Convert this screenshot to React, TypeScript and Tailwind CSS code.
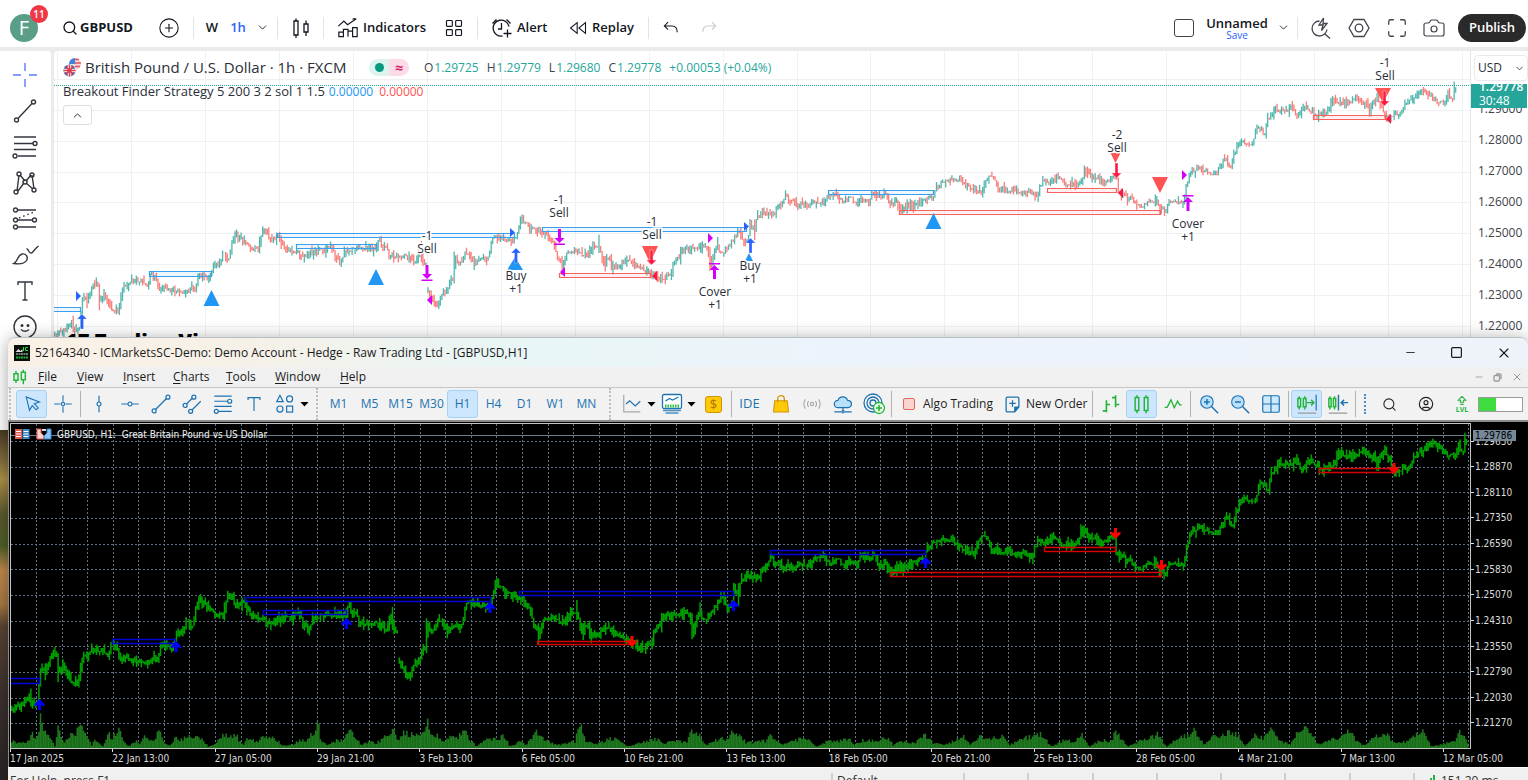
import React from "react";
import {
  ChevronDown, ChevronUp, CirclePlus, Search, LayoutGrid, Camera, Maximize, X, Minus, Square, CircleUser,
} from "lucide-react";

const TV_FONT = "font-['Open_Sans','Noto_Sans',sans-serif]";

/* ---------- price data: [x, y] anchors in thirds of a pixel ---------- */
const LEG_A = [35,778,50,775,65,755,88,735,100,765,112,750,118,700,122,645,130,660,137,670,142,650,155,610,168,610,174,670,180,655,188,645,200,665,212,690,225,705,233,690,240,665,250,615,262,612,272,600,290,605,310,605,322,620,335,580,345,590,360,625,378,620,395,632,415,635,425,628,440,645,450,632,460,625,475,628,482,580,495,585,505,592,520,590,527,555,535,550,548,550,560,510,570,525,580,530,590,465,598,450,605,455,615,460,628,480,645,495,660,490,668,505,678,450,690,432,705,465,720,465,735,450,745,490,760,500,775,500,790,500,805,520,820,510,840,508,860,503,875,502,890,488,900,500,912,525,925,540,935,510,950,500,960,500,975,490,990,490,1005,495,1020,495,1035,500,1040,480,1048,470,1058,490,1070,490,1078,525,1095,520,1115,522,1140,525,1150,530,1160,540,1168,510,1175,490,1183,545,1195,545];
const LEG_B = [1198,640,1210,660,1225,685,1238,655,1250,640,1262,620,1275,590,1280,545,1283,520,1292,550,1305,540,1312,500,1325,520,1345,540,1358,530,1370,515,1380,535,1390,500,1397,460,1420,462,1445,465,1460,470,1470,460,1478,430,1488,400,1500,410,1510,425,1530,437,1565,445,1585,460,1598,515,1610,540,1615,565,1625,520,1640,500,1660,508,1680,512,1698,518,1710,485,1725,490,1732,480,1740,530,1748,540,1760,530,1775,555,1795,550,1815,538,1830,535,1845,550,1860,560,1880,570,1900,580,1915,592,1925,585,1935,598,1942,575,1955,578,1965,540,1980,525,1992,495,2010,500,2030,492,2050,492,2070,490,2077,555,2083,550,2090,510,2098,475,2102,500,2115,505,2130,495,2145,470,2165,440,2175,460,2188,475,2195,470,2202,420,2212,415,2216,445,2222,385,2240,378,2260,380,2275,385,2285,355,2298,355,2315,320,2330,340,2350,355,2370,345,2390,350,2410,340,2430,345,2448,312,2470,325,2490,340,2505,340,2512,325,2535,348,2550,330,2570,340,2582,315,2595,325,2610,325,2622,315,2640,352,2660,345,2675,372,2690,355,2710,355,2730,345,2745,330,2770,325,2780,300,2795,275,2815,272,2835,275,2853,270,2870,290,2885,290,2900,300,2922,312,2932,280,2945,255,2962,270,2975,305,2990,300,3005,315,3020,295,3035,310,3054,315,3074,305,3094,325,3104,290,3116,268,3129,282,3149,272,3169,265,3184,290,3204,285,3224,290,3236,270,3244,235,3259,260,3279,268,3299,285,3316,270,3334,260,3344,270,3349,310,3364,320,3379,335,3399,340,3419,358,3434,350,3449,340,3466,335,3484,370,3499,365,3514,335,3534,338,3549,348,3559,300,3569,262,3584,240,3596,225,3609,240,3629,240,3646,250,3661,235,3672,210,3684,200,3697,230,3709,190,3719,150,3739,145,3754,162,3769,140,3782,95,3794,110,3804,120,3812,75,3824,65,3834,42,3854,42,3874,42,3889,25,3904,60,3916,45,3929,35,3954,50,3959,60,3984,50,3999,48,4014,10,4029,20,4044,20,4059,15,4074,10,4092,0,4109,15,4124,20,4132,50,4139,15,4151,5,4164,15,4172,35,4184,65,4199,60,4214,50,4229,55,4239,30,4249,5,4264,5,4279,-10,4296,-25,4314,-15,4329,5,4344,15,4364,10,4376,-10,4389,5,4394,-25,4404,-40];
const VOLUME = [35,20,60,15,80,15,97,40,110,25,118,60,122,95,130,50,140,40,150,30,165,5,175,85,182,30,195,20,210,40,225,40,243,75,255,40,275,10,285,25,310,5,325,45,335,30,355,60,370,20,385,5,410,20,420,10,435,35,455,20,470,35,478,60,490,20,510,8,525,30,545,25,560,40,575,25,588,48,600,30,625,5,650,15,670,40,690,38,705,40,730,10,745,30,775,15,785,30,820,30,850,8,880,10,900,25,920,20,935,40,950,45,953,85,960,40,965,20,985,8,1010,25,1030,20,1045,55,1065,30,1085,10,1110,20,1130,15,1160,35,1180,55,1195,20,1210,45,1240,40,1260,35,1275,50,1280,95,1290,40,1310,40,1330,15,1345,35,1370,30,1395,50,1410,25,1430,5,1460,30,1490,25,1510,40,1530,5,1560,20,1580,10,1610,48,1630,30,1650,15,1680,10,1700,15,1725,20,1732,50,1748,60,1755,20,1790,10,1825,28,1855,25,1880,5,1915,15,1940,20,1970,28,1990,15,2030,20,2060,15,2078,58,2095,40,2120,10,2140,20,2165,28,2185,25,2200,55,2215,40,2240,15,2270,20,2295,20,2312,38,2330,20,2350,10,2390,25,2420,28,2450,5,2480,20,2505,20,2542,30,2565,10,2595,25,2630,22,2660,30,2680,10,2715,22,2745,15,2775,40,2800,15,2830,10,2860,20,2892,38,2910,10,2940,35,2970,25,3005,35,3030,10,3054,20,3089,35,3124,40,3154,5,3194,25,3224,18,3244,40,3269,5,3304,25,3334,20,3347,50,3364,25,3384,5,3424,25,3454,30,3474,40,3499,5,3534,30,3564,35,3582,50,3614,10,3644,35,3694,45,3714,40,3734,5,3764,35,3794,30,3814,60,3844,20,3869,10,3894,45,3924,58,3954,10,3994,25,4019,25,4039,55,4074,20,4094,8,4124,35,4159,45,4184,12,4224,20,4254,40,4274,50,4294,5,4344,15,4364,20,4381,50,4404,15];
/* long wicks: [x, high, low] */
const SPIKES = [[174,610,697],[137,640,690],[595,445,480],[735,440,470],[925,520,550],[1175,470,540],[1280,505,610],[1340,520,565],[1615,520,582],[1732,450,510],[1748,520,570],[1775,535,580],[1935,580,612],[2076,490,568],[2083,520,562],[2098,457,500],[2202,398,450],[2216,400,467],[1488,390,430],[2675,350,377],[3244,223,260],[3466,318,350],[3500,350,380],[3485,350,382],[3834,30,60],[3889,12,45],[4132,20,62],[4014,-5,30],[4151,0,30],[4394,-52,0],[4376,-25,15]];

type Bar = { x: number; open: number; close: number; high: number; low: number };

function noise(n: number) {
  const v = Math.sin(n * 127.1 + 11.7) * 43758.5453;
  return v - Math.floor(v);
}
function sample(points: number[], x: number) {
  for (let i = 2; i < points.length; i += 2) {
    if (x <= points[i]) {
      const t = (x - points[i - 2]) / (points[i] - points[i - 2]);
      return points[i - 1] + (points[i + 1] - points[i - 1]) * t;
    }
  }
  return points[points.length - 1];
}
function makeBars(points: number[]): Bar[] {
  const bars: Bar[] = [];
  let open = 450 + points[1] / 3;
  for (let x = points[0]; x <= points[points.length - 2]; x += 4.8) {
    const close = 450 + sample(points, x) / 3 + (noise(x) - 0.5) * 5;
    let high = Math.min(open, close) - noise(x + 3) ** 2 * 6 - 0.3;
    let low = Math.max(open, close) + noise(x + 7) ** 2 * 6 + 0.3;
    for (const [sx, top, bottom] of SPIKES) {
      if (Math.abs(sx - x) <= 2.4) {
        high = Math.min(high, 450 + top / 3);
        low = Math.max(low, 450 + bottom / 3);
      }
    }
    bars.push({ x: x / 3, open, close, high, low });
    open = close;
  }
  return bars;
}
const BARS = [...makeBars(LEG_A), ...makeBars(LEG_B)];

const upperX = (x: number) => 81 + (x - 39) * 0.963;
const upperY = (y: number) => 113 + (y - 467) * 0.9156;
function upperPath(rising: boolean) {
  return BARS.filter((b) => b.close <= b.open === rising)
    .map((b) => `M${upperX(b.x).toFixed(1)} ${upperY(b.high).toFixed(1)}V${upperY(b.low).toFixed(1)}`)
    .join("");
}
const UP_PATH = upperPath(true);
const DOWN_PATH = upperPath(false);
const LOWER_PATH = BARS.map((b) => `M${b.x.toFixed(1)} ${b.high.toFixed(1)}V${b.low.toFixed(1)}`).join("");
const VOLUME_PATH = (() => {
  let d = "";
  for (let x = 35; x <= 4404; x += 4.8) {
    const h = Math.max(1, (sample(VOLUME, x) / 3) * (0.75 + noise(x) * 0.5));
    d += `M${(x / 3).toFixed(1)} 748v-${h.toFixed(1)}`;
  }
  return d;
})();

const range = (n: number) => Array.from({ length: n }, (_, i) => i);
const boxes = (list: number[][]) => list.map(([a, b, c, d]) => `M${a}.5 ${b}.5H${c}.5V${d}.5H${a}.5Z`).join("");

/* ---------- upper chart ---------- */
const TV_BLUE = [[40,307,80,311],[149,271,211,276],[277,233,514,237],[296,244,376,248],[542,227,746,231],[828,190,933,194]];
const TV_RED = [[559,273,650,277],[899,210,1160,214],[1047,188,1116,192],[1313,115,1385,119]];
const TV_LABELS: [number, number, string, string][] = [
  [427,240,"-1","Sell"],[559,204,"-1","Sell"],[652,226,"-1","Sell"],[1117,139,"-2","Sell"],[1385,67,"-1","Sell"],
  [516,280,"Buy","+1"],[750,270,"Buy","+1"],[715,296,"Cover","+1"],[1188,228,"Cover","+1"],
];

function UpperChart() {
  const tri = (x: number, y: number, w: number, h: number) => `M${x - w} ${y + h}L${x} ${y}L${x + w} ${y + h}Z`;
  return (
    <svg className="block h-full w-full" role="img" aria-label="GBPUSD candles">
      <g transform="translate(-54,-51)">
        <path d={range(20).map((i) => `M${Math.round(57 + i * 73.95)}.5 51V800`).join("")} stroke="#f0f1f2" />
        <path d={range(12).map((i) => `M54 ${Math.round(79 + i * 30.85)}.5H1470`).join("")} stroke="#f0f1f2" />
        <path d="M54 85.5H1470" stroke="#26a69a" strokeDasharray="1 1" shapeRendering="crispEdges" />
        <g strokeWidth="1.3" opacity=".8">
          <path d={UP_PATH} stroke="#26a69a" />
          <path d={DOWN_PATH} stroke="#f7605c" />
        </g>
        <path d={boxes(TV_BLUE)} fill="#2196f3" fillOpacity=".08" stroke="#3b9ff0" strokeWidth="1.2" />
        <path d={boxes(TV_RED)} fill="#ff5252" fillOpacity=".08" stroke="#f7625e" strokeWidth="1.2" />
        <path fill="#2196f3" d={tri(211.5,290,8,16) + tri(376,269,8,16) + tri(933.5,213,8,16) + tri(515,257,8,13) + tri(749,253,4,8)} />
        <path fill="#ff5252" d="M642 246h16l-8 17ZM1110.500 153h10l-5 10ZM1152 177h16l-8 16ZM1375 88h16l-8 15Z" />
        <g fill="#2962ff">
          {[[82,314],[516,248],[750.5,238]].map(([x, y]) => (
            <path key={x} stroke="#fff" strokeWidth=".3" d={`M${x} ${y}l5 5h-3.500v10h-3v-10h-3.500Z`} />
          ))}
          <path d="M76 291v10l5-5ZM510 228v9l5-4.500ZM744 222v9l5-4.500Z" />
        </g>
        <g fill="#d500f9">
          {[[427,265],[559.5,229]].map(([x, y]) => (
            <path key={x} d={`M${x - 1.5} ${y}h3v9h3.500l-5 5l-5 -5h3.500ZM${x - 5.5} ${y + 14.5}h11v1.500h-11Z`} />
          ))}
          {[[714.5,263],[1188,195]].map(([x, y]) => (
            <path key={x} d={`M${x - 1.5} ${y + 16}h3v-9h3.500l-5 -5l-5 5h3.500ZM${x - 5.5} ${y}h11v1.500h-11Z`} />
          ))}
          <path d="M432 295v10l-5-5ZM565 267v10l-5-5ZM708 233v10l5-5ZM1182 170v10l5-5Z" />
        </g>
        <g fill="#ff1744">
          {[[651.5,250],[1116.5,163],[1384.5,91]].map(([x, y]) => (
            <path key={x} stroke="#fff" strokeWidth=".4" d={`M${x - 1.5} ${y}h3v10h3.500l-5 5l-5 -5h3.500Z`} />
          ))}
          <path d="M657 271v10l-5-5ZM1123 188v10l-5-5ZM1391 114v10l-5-5Z" />
        </g>
        <g fill="#2a2e39" fontSize="12" textAnchor="middle" stroke="#fff" strokeWidth="3" paintOrder="stroke">
          {TV_LABELS.map(([x, y, a, b]) => (
            <g key={x}>
              <text x={x} y={y}>{a}</text>
              <text x={x} y={y + 13}>{b}</text>
            </g>
          ))}
        </g>
      </g>
    </svg>
  );
}

/* ---------- lower chart ---------- */
const MT_BLUE = [[5,678,39,683],[112,639,175,643],[245,597,490,601],[263,610,346,614],[519,591,733,595],[770,550,925,554]];
const MT_RED = [[537,641,632,644],[890,572,1161,576],[1044,547,1115,551],[1319,468,1394,472]];

function LowerChart() {
  return (
    <svg className="block h-full w-full" role="img" aria-label="GBPUSD H1 bars">
      <g transform="translate(-11,-424)">
        <path d={range(57).map((i) => `M${Math.round(36 + i * 25.58)}.5 424V748`).join("")} stroke="#5f7285" strokeDasharray="2 2" shapeRendering="crispEdges" />
        <path d={range(12).map((i) => `M11 ${Math.round(441 + i * 25.66)}.5H1470`).join("")} stroke="#5f7285" strokeDasharray="2 2" shapeRendering="crispEdges" />
        <path d="M11 435.5H1470" stroke="#6b7c8d" />
        <path d={VOLUME_PATH} stroke="#1f7a1f" strokeWidth="1.5" />
        <path d={LOWER_PATH} stroke="#00a000" strokeWidth="1.5" />
        <path d={boxes(MT_BLUE)} fill="none" stroke="#0000d8" strokeWidth="1.4" />
        <path d={boxes(MT_RED)} fill="none" stroke="#d80000" strokeWidth="1.4" />
        <g fill="#00f">
          {[[39.5,699],[176,641],[346.5,618],[490,602],[733.5,600],[925.5,557]].map(([x, y]) => (
            <path key={x} d={`M${x} ${y}l5 5v2.500l-3.500 -1.500v5h-3v-5l-3.500 1.500v-2.500Z`} />
          ))}
        </g>
        <g fill="red">
          {[[632,647],[1115.5,539],[1161.5,571],[1394,474]].map(([x, y]) => (
            <path key={x} d={`M${x} ${y}l5 -5v-2.500l-3.500 1.500v-5h-3v5l-3.500 -1.500v2.500Z`} />
          ))}
        </g>
      </g>
    </svg>
  );
}

/* ---------- shared pieces ---------- */
function Glyph({ size = 24, className = "", children }: { size?: number; className?: string; children: React.ReactNode }) {
  return (
    <svg width={size} height={size} viewBox="0 0 24 24" fill="none" stroke="currentColor" strokeWidth="1.3" className={`shrink-0 ${className}`} aria-hidden="true">
      {children}
    </svg>
  );
}
function TopButton({ label, className, children }: { label: string; className: string; children: React.ReactNode }) {
  return (
    <button type="button" aria-label={label} className={`flex h-9 shrink-0 items-center justify-center ${className}`}>
      {children}
    </button>
  );
}
const TopRule = () => <span className="h-[22px] w-px shrink-0 bg-[#e4e5e8]" />;

function TopBar() {
  return (
    <header className="flex h-[47px] shrink-0 items-center bg-white pt-2 text-[13px] font-semibold text-[#131722]">
      <button type="button" aria-label="Account menu" className="relative ml-[10px] flex size-7 shrink-0 items-center justify-center rounded-full bg-[#5b9e88] text-xl font-normal text-white">
        F
        <span className="absolute -top-[9px] left-5 flex size-[18px] items-center justify-center rounded-full bg-[#f23645] text-[10px] font-semibold">11</span>
      </button>
      <TopButton label="Symbol search" className="ml-6 w-[73px] justify-start gap-[2px] font-bold">
        <Search size={16} strokeWidth={2} className="shrink-0" />GBPUSD
      </TopButton>
      <TopButton label="Compare" className="ml-[22px] w-[24px]"><CirclePlus size={22} strokeWidth={1.2} /></TopButton>
      <span className="w-3 shrink-0" />
      <TopRule />
      <TopButton label="1 week" className="ml-2 w-[20px]">W</TopButton>
      <TopButton label="1 hour" className="ml-[6px] w-[20px] text-[#2962ff]">1h</TopButton>
      <TopButton label="More intervals" className="ml-1 w-[20px]"><ChevronDown size={13} strokeWidth={1.6} /></TopButton>
      <span className="w-[5px] shrink-0" />
      <TopRule />
      <TopButton label="Chart type" className="w-[45px]">
        <Glyph><path d="M5 5h4v14H5zM7 2.500V5M7 19v3M15 8h4v8h-4zM17 4.500V8M17 16v4" /></Glyph>
      </TopButton>
      <TopRule />
      <TopButton label="Indicators" className="ml-[13px] w-[90px] justify-start gap-1">
        <Glyph size={22}><path d="M1.500 10l6-5.500 4 4L21 2M21 2h-4M2 21.500v-5h5v5zM7 21.500v-8h5v8M12 21.500v-6h5v6M17 21.500v-10h5v10z" /></Glyph>Indicators
      </TopButton>
      <TopButton label="Layouts" className="ml-[15px] w-[24px]"><LayoutGrid size={20} strokeWidth={1.4} /></TopButton>
      <span className="w-[11px] shrink-0" />
      <TopRule />
      <TopButton label="Alert" className="ml-3 w-[60px] justify-start gap-[3px]">
        <Glyph size={24}><path d="M19 10.500A8 8 0 1 0 12.500 20M11.500 7v6H8M2.500 7.500l4-4M20.500 7.500l-4-4M17.500 13.500v8M13.500 17.500h8" /></Glyph>Alert
      </TopButton>
      <TopButton label="Replay" className="ml-[18px] w-[66px] justify-start gap-1">
        <Glyph size={20}><path d="M11 5.500v13L3 12zM21 5.500v13L13 12z" /></Glyph>Replay
      </TopButton>
      <span className="w-[14px] shrink-0" />
      <TopRule />
      <TopButton label="Undo" className="ml-[10px] w-[24px]"><Glyph size={20}><path d="M8.500 5L4 9.500 8.500 14M4 9.500h9q6.500 0 6.500 7.500" /></Glyph></TopButton>
      <TopButton label="Redo" className="ml-[14px] w-[24px] text-[#c9cbd0]"><Glyph size={20}><path d="M15.500 5L20 9.500 15.500 14M20 9.500h-9q-6.500 0-6.500 7.500" /></Glyph></TopButton>
      <span className="grow" />
      <TopButton label="Layout setup" className="w-6"><span className="h-[18px] w-5 rounded-[3px] border-[1.500px] border-[#40434c]" /></TopButton>
      <TopButton label="Save layout" className="ml-2 w-[66px] flex-col text-[13px] leading-4">
        Unnamed<span className="text-[10px] leading-[9px] font-normal text-[#2962ff]">Save</span>
      </TopButton>
      <TopButton label="Manage layouts" className="ml-[3px] w-[20px]"><ChevronDown size={13} strokeWidth={1.6} /></TopButton>
      <span className="w-1 shrink-0" />
      <TopRule />
      <TopButton label="Quick search" className="ml-[11px] w-6 text-[#40434c]">
        <Glyph><path d="M10.500 5A7.500 7.500 0 1 0 18 13.500M16 18l5 4.500M14.500 2l-4.500 7h4l-1.500 5.500L18 7.500h-4z" /></Glyph>
      </TopButton>
      <TopButton label="Settings" className="relative ml-[14px] w-6 text-[#40434c]">
        <Glyph><path d="M7 3.500h10l5 8.500-5 8.500H7L2 12z" /><circle cx="12" cy="12" r="3.800" /></Glyph>
      </TopButton>
      <TopButton label="Fullscreen" className="ml-[14px] w-6 text-[#40434c]"><Maximize size={22} strokeWidth={1.4} /></TopButton>
      <TopButton label="Take a snapshot" className="ml-[13px] w-6 text-[#40434c]"><Camera size={24} strokeWidth={1.2} /></TopButton>
      <button type="button" className="mr-[2px] ml-3 h-7 w-[68px] shrink-0 rounded-full bg-[#2a2a2a] text-[13px] font-semibold text-white">Publish</button>
    </header>
  );
}

const DRAW_TOOLS: { label: string; art: React.ReactNode; tone?: string }[] = [
  { label: "Crosshair", tone: "text-[#5b7cff]", art: <path d="M12 0v8M12 16v8M0 12h8M16 12h8" /> },
  { label: "Trend line", art: <><path d="M5 19.500L19 4.500" /><circle cx="3.500" cy="21" r="2" /><circle cx="20.500" cy="3" r="2" /></> },
  { label: "Fibonacci", art: <><path d="M1 2h22M1 8.500h19M1 14.500h22M5 21h18" /><circle cx="22" cy="8.500" r="2" /><circle cx="2" cy="21" r="2" /></> },
  { label: "Patterns", art: <><path d="M4 20L6 4M7 4l5 6M13 10l5-6M19 4l2 14M5 20l6-8M13 12l7 6" /><circle cx="6" cy="3" r="2" /><circle cx="19" cy="4" r="2" /><circle cx="12" cy="11" r="2" /><circle cx="3" cy="21" r="2" /><circle cx="21" cy="19" r="2" /></> },
  { label: "Projection", art: <><path d="M4 3h19M4 13h16M4 20h19" /><path d="M6 11l15-6" strokeDasharray="1.500 3" /><circle cx="2.500" cy="3" r="2" /><circle cx="2.500" cy="13" r="2" /><circle cx="21.500" cy="13" r="2" /><circle cx="2.500" cy="20" r="2" /></> },
  { label: "Brush", art: <path d="M1 20.500c4-2 3-8 8-9.500 4-.8 6.500 3 4.500 6.500-2.500 4-9 3.500-12.500 3zM13.500 6c2-1 2 5 5 4 2-1 4-5 7-7" /> },
  { label: "Text", art: <path d="M5 6V3h14v3M12 3v18M9.500 21h5" /> },
  { label: "Emoji", art: <><circle cx="12" cy="12" r="11" /><circle cx="9" cy="10.500" r=".8" fill="currentColor" /><circle cx="15" cy="10.500" r=".8" fill="currentColor" /><path d="M8 14.500q4 3.500 8 0" /></> },
];

function DrawingRail() {
  return (
    <nav aria-label="Drawing tools" className="flex w-[51px] shrink-0 flex-col items-center rounded-tr bg-white pt-[6px] text-[#33363f]">
      {DRAW_TOOLS.map((t) => (
        <button key={t.label} type="button" aria-label={t.label} className={`flex h-9 w-full items-center justify-center pr-[2px] ${t.tone ?? ""}`}>
          <svg width="24" height="24" viewBox="0 0 24 24" overflow="visible" fill="none" stroke="currentColor" strokeWidth="1.4">{t.art}</svg>
        </button>
      ))}
    </nav>
  );
}

function Quote({ k, v }: { k: string; v: string }) {
  return <span className="text-[#40434c]">{k}<span className="ml-px text-[#26a69a]">{v}</span></span>;
}

function Legend() {
  return (
    <div className="absolute top-[6px] left-[9px] text-[#2a2e39]">
      <div className="flex h-[21px] items-center">
        <svg width="18" height="19" viewBox="0 0 18 19" aria-hidden="true">
          <circle cx="12" cy="6" r="6" fill="#f5d5d8" /><path d="M12 1.500h4M12 5h6M12 8.500h5" stroke="#e0525e" strokeWidth="1.600" /><path d="M6 6a6 6 0 0 1 6-6v6z" fill="#3a86dd" />
          <circle cx="6.500" cy="12.500" r="6.500" fill="#fff" /><circle cx="6.500" cy="12.500" r="6" fill="#3b62b5" /><path d="M6.500 6.500v12M.5 12.500h12" stroke="#fff" strokeWidth="3.600" /><path d="M6.500 6.500v12M.5 12.500h12M2.500 8.500l8 8M10.500 8.500l-8 8" stroke="#e23c4a" strokeWidth="1.600" />
        </svg>
        <h1 className="ml-1 w-[284px] text-[15px] whitespace-nowrap">British Pound / U.S. Dollar · 1h · FXCM</h1>
        <span className="flex h-[17px] w-10 overflow-hidden rounded-full text-[#d6246e]">
          <span className="flex w-5 items-center justify-center bg-[#dcf3ee]"><span className="size-[9px] rounded-full bg-[#089981]" /></span>
          <span className="flex w-5 items-center justify-center bg-[#fbdbe8] text-sm leading-none font-bold">≈</span>
        </span>
        <span className="ml-[15px] flex gap-2 text-xs whitespace-nowrap">
          <Quote k="O" v="1.29725" /><Quote k="H" v="1.29779" /><Quote k="L" v="1.29680" /><Quote k="C" v="1.29778" />
          <span className="text-[#26a69a]">+0.00053 (+0.04%)</span>
        </span>
      </div>
      <div className="mt-[4px] flex h-5 items-center gap-1 text-[13px] whitespace-nowrap">
        Breakout Finder Strategy 5 200 3 2 sol 1 1.5
        <span className="flex gap-[6px] text-xs"><span className="text-[#2196f3]">0.00000</span><span className="text-[#ff5252]">0.00000</span></span>
      </div>
      <button type="button" aria-label="Collapse legend" className="mt-[3px] flex h-5 w-[29px] items-center justify-center rounded-[3px] border border-[#dcdee3] bg-white">
        <ChevronUp size={13} strokeWidth={1.8} />
      </button>
    </div>
  );
}

function UpperAxis() {
  return (
    <aside className="relative w-[58px] shrink-0 border-l border-[#e4e5e8] bg-white text-xs text-[#40434c]">
      <div className="flex flex-col gap-[15px] pt-[50px]">
        {["1.29000", "1.28000", "1.27000", "1.26000", "1.25000", "1.24000", "1.23000", "1.22000"].map((p) => (
          <span key={p} className="block pl-[7px] leading-4">{p}</span>
        ))}
      </div>
      <div className="absolute top-[33px] left-0 flex h-[24px] w-[56px] flex-col justify-end overflow-hidden bg-[#26a69a] pl-2 leading-[14px] text-white">
        <span className="font-semibold">1.29778</span><span>30:48</span>
      </div>
      <label className="absolute top-1 right-0 left-[3px] flex h-[26px] items-center rounded border border-[#e9eaed] bg-white">
        <span className="sr-only">Currency</span>
        <select className="h-6 w-full appearance-none bg-transparent pl-[3px] text-xs text-[#2a2e39]"><option>USD</option></select>
        <ChevronDown size={11} strokeWidth={2} className="pointer-events-none absolute right-[2px]" />
      </label>
    </aside>
  );
}

/* ---------- terminal window ---------- */
function Tool({ label, active, children }: { label: string; active?: boolean; children: React.ReactNode }) {
  return (
    <button type="button" aria-label={label} className={`flex h-[28px] w-[31px] shrink-0 items-center justify-center rounded-[3px] border ${active ? "border-[#a5d2f5] bg-[#cce6fd]" : "border-transparent"}`}>
      {children}
    </button>
  );
}
const Rule = () => <span className="mx-[2px] h-[26px] w-px shrink-0 bg-[#b0b0b0]" />;
const Grip = ({ wide }: { wide?: boolean }) => (
  <span className={`flex h-full shrink-0 items-center justify-end pr-[5px] ${wide ? "w-[14px]" : "w-[8px]"}`}><span className="h-full border-l-2 border-dotted border-[#bdbdbd]" /></span>
);
const Caret = () => <svg width="9" height="6" viewBox="0 0 9 6" className="shrink-0" aria-hidden="true"><path d="M.5 1h8L4.500 5.500z" fill="#000" /></svg>;

const LINE_TOOLS: [string, React.ReactNode][] = [
  ["Vertical line", <path d="M12 3v6.500M12 14.500V21M12 9.800a2.200 2.200 0 1 0 .01 0" />],
  ["Horizontal line", <path d="M2.500 12h7M14.500 12h7M12 9.800a2.200 2.200 0 1 0 .01 0" />],
  ["Trend line", <><path d="M6 18L18 6" /><circle cx="4.500" cy="19.500" r="2.200" /><circle cx="19.500" cy="4.500" r="2.200" /></>],
  ["Channel", <><path d="M6 12l6.500-6.500M12 18.500L21.500 9" /><circle cx="4.500" cy="13.500" r="2.200" /><circle cx="14" cy="4.500" r="2.200" /><circle cx="10.500" cy="20" r="2.200" /></>],
  ["Fibonacci", <><path d="M2.500 3.500h19M2.500 9h14.500M2.500 14.500h19M7 20h14.500" /><circle cx="19.300" cy="9" r="2.200" /><circle cx="4.700" cy="20" r="2.200" /></>],
  ["Text label", <path d="M5.500 7.500V5h13v2.500M12 5v14.500" />],
  ["Shapes", <><path d="M6.500 2.500L10 9.500H3z" /><circle cx="17" cy="6.500" r="3.300" /><circle cx="6.500" cy="17.500" r="3.300" /><rect x="13.800" y="14.300" width="6.500" height="6.500" /></>],
];

function TerminalToolbar() {
  return (
    <div role="toolbar" aria-label="Charting" className="flex h-[33px] shrink-0 items-center overflow-hidden border-t border-[#c6c6c6] bg-[#f2f2f2] text-[#1c72b0]">
      <Grip />
      <Tool label="Cursor" active><Glyph size={20}><path d="M5 3.500l4 16 3.300-5.500 4.700 5 2.500-2.300-4.800-5 6.300-2.200z" /></Glyph></Tool>
      <Tool label="Crosshair"><Glyph size={20}><path d="M12 1.500v7.500M12 15v7.500M1.500 12H9M15 12h7.500" /><circle cx="12" cy="12" r="2" /></Glyph></Tool>
      <Rule />
      {LINE_TOOLS.map(([label, art]) => <Tool key={label} label={label}><Glyph size={22}>{art}</Glyph></Tool>)}
      <Caret />
      <Grip wide />
      {["M1", "M5", "M15", "M30", "H1", "H4", "D1", "W1", "MN"].map((t) => (
        <Tool key={t} label={t} active={t === "H1"}><span className="text-xs">{t}</span></Tool>
      ))}
      <Grip wide />
      <Tool label="Line studies"><Glyph size={22}><path d="M3 2v18.500h18" stroke="#a8a8a8" /><path d="M5.500 12l4-3.500 6 5.500 5.500-5" /></Glyph></Tool>
      <Caret />
      <Tool label="Indicators">
        <Glyph size={24}><rect x="2.500" y="2.500" width="19" height="14" rx="1.500" fill="#fff" /><path d="M5.500 9l4-2.500 3 1.500 6-3" /><path d="M5 14h14" stroke="#2ebd3c" strokeWidth="3" strokeDasharray="1.500 1" /><path d="M3 18.500h18M5.500 21h13" stroke="#4b8fbf" /></Glyph>
      </Tool>
      <Caret />
      <span className="w-[2px]" />
      <Tool label="Trade panel"><span className="flex size-[17px] items-center justify-center rounded-[3px] border border-[#cf9606] bg-[#ffc907] text-[13px] leading-none text-[#a87400]">$</span></Tool>
      <Rule />
      <Tool label="IDE"><span className="text-[13px]">IDE</span></Tool>
      <Tool label="Market"><Glyph size={20}><path d="M4.500 8h15l1.500 13.500H3z" fill="#ffc907" stroke="#cf9606" /><path d="M8 10V6a4 4 0 0 1 8 0v4" stroke="#cf9606" strokeWidth="1.600" /></Glyph></Tool>
      <Tool label="Signals"><Glyph size={20} className="text-[#a8a8a8]"><circle cx="12" cy="12" r="2" /><path d="M8 8.500a5.500 5.500 0 0 0 0 7M16 8.500a5.500 5.500 0 0 1 0 7M4 6.500a10 10 0 0 0 0 11M20 6.500a10 10 0 0 1 0 11" /></Glyph></Tool>
      <Tool label="VPS"><Glyph size={22}><path d="M6.500 16a4 4 0 0 1 0-8 5.500 5.500 0 0 1 10.500 0 4 4 0 0 1 .5 8z" fill="#b9e0fb" /><path d="M12 16v4M2.500 20.500H10M14 20.500h7.500" /><circle cx="12" cy="20.500" r="1.300" /></Glyph></Tool>
      <Tool label="Copy trading"><Glyph size={24}><circle cx="11" cy="11" r="9" /><circle cx="11" cy="11" r="6" /><circle cx="11" cy="11" r="3" /><circle cx="17" cy="16" r="5.500" fill="#e9ffe9" stroke="#22b53a" /><path d="M17 13v6M14 16h6" stroke="#22b53a" strokeWidth="1.600" /></Glyph></Tool>
      <Rule />
      <button type="button" className="ml-[9px] flex w-[95px] shrink-0 items-center gap-2 text-xs whitespace-nowrap text-[#1e1e1e]">
        <span className="size-3 shrink-0 rounded-[2px] border border-[#e2645e] bg-[#fbd3cf]" />Algo Trading
      </button>
      <button type="button" className="ml-[6px] flex w-[86px] shrink-0 items-center gap-[5px] text-xs whitespace-nowrap text-[#1e1e1e]">
        <Glyph size={17} className="text-[#1c72b0]"><path d="M3 3.500q0-2 2-2h14q2 0 2 2v12l-6 7H5q-2 0-2-2zM12 6v9M7.500 10.500h9" strokeWidth="1.800" /><path d="M21 15.500l-6 7v-7z" fill="currentColor" /></Glyph>New Order
      </button>
      <Rule />
      <Tool label="Bar chart"><Glyph size={22} className="text-[#23b53a]"><path d="M7 8v13M3 19.500h4M7 12.500h4M17 2.500v13M13 5h4M17 12.500h4" strokeWidth="1.800" /></Glyph></Tool>
      <Tool label="Candle chart" active><Glyph size={22} className="text-[#23b53a]"><path d="M4.500 5h4v14h-4zM6.500 2.500V5M6.500 19v3M14.500 5h4v14h-4zM16.500 2.500V5M16.500 19v3" strokeWidth="1.600" /></Glyph></Tool>
      <Tool label="Line chart"><Glyph size={20} className="text-[#23b53a]"><path d="M2 16h3l4.500-9 4 9.500 4-8 2.500 4.500h2.500" strokeWidth="1.600" /></Glyph></Tool>
      <Rule />
      <Tool label="Zoom in"><Glyph size={20}><circle cx="9.500" cy="9.500" r="7.500" fill="#b9e0fb" /><path d="M15 15l8 8M9.500 6v7M6 9.500h7" strokeWidth="1.800" /></Glyph></Tool>
      <Tool label="Zoom out"><Glyph size={20}><circle cx="9.500" cy="9.500" r="7.500" fill="#b9e0fb" /><path d="M15 15l8 8M6 9.500h7" strokeWidth="1.800" /></Glyph></Tool>
      <Tool label="Tile windows"><Glyph size={22}><rect x="3" y="3" width="18" height="18" rx="1.500" fill="#cfeafd" /><path d="M12 3v18M3 12h18" /></Glyph></Tool>
      <Rule />
      <Tool label="Auto scroll" active><Glyph size={22}><path d="M2 6h3v9H2zM3.500 3.500V6M3.500 15v3M8 6h3v9H8zM9.500 3.500V6M9.500 15v3M12 10.500h7M16.500 7.500l3 3-3 3" stroke="#23b53a" strokeWidth="1.600" /><path d="M22 2v17" /><path d="M2 22h20" stroke="#9a9a9a" /></Glyph></Tool>
      <Tool label="Chart shift"><Glyph size={22}><path d="M2 6h2.500v9H2zM3.200 3.500V6M3.200 15v3M7 6h2.500v9H7zM8.200 3.500V6M8.200 15v3" stroke="#23b53a" strokeWidth="1.600" /><path d="M12.500 2v17M23 10.500h-7M18.500 7.500l-3 3 3 3" strokeWidth="1.600" /><path d="M2 22h20" stroke="#9a9a9a" /></Glyph></Tool>
      <Rule />
      <span className="ml-[6px] h-5 border-l-2 border-dotted border-[#4b8fbf]" />
      <span className="grow" />
      <button type="button" aria-label="Search" className="text-[#222]"><Search size={15} strokeWidth={1.7} /></button>
      <button type="button" aria-label="Profile" className="ml-[21px] text-[#222]"><CircleUser size={16} strokeWidth={1.7} /></button>
      <span className="ml-[20px] flex w-[16px] shrink-0 flex-col items-center text-[7px] leading-[7px] font-bold text-[#23b53a]">
        <Glyph size={10}><path d="M12 1l9 9h-5v5H8v-5H3zM8 20h8" strokeWidth="2.600" /></Glyph>LVL
      </span>
      <span className="mr-[5px] ml-2 flex h-[15px] w-[45px] shrink-0 border border-[#9b9b9b] bg-white"><span className="w-[17px] bg-[#3fdc3f]" /></span>
    </div>
  );
}

const DATES = ["17 Jan 2025", "22 Jan 13:00", "27 Jan 05:00", "29 Jan 21:00", "3 Feb 13:00", "6 Feb 05:00", "10 Feb 21:00", "13 Feb 13:00", "18 Feb 05:00", "20 Feb 21:00", "25 Feb 13:00", "28 Feb 05:00", "4 Mar 21:00", "7 Mar 13:00", "12 Mar 05:00"];
const PRICES = ["1.29630", "1.28870", "1.28110", "1.27350", "1.26590", "1.25830", "1.25070", "1.24310", "1.23550", "1.22790", "1.22030", "1.21270"];

function TerminalChart() {
  return (
    <div className="flex h-[347px] shrink-0 flex-col border-t-2 border-l border-[#8a8a8a] bg-black pt-px pl-px font-['DejaVu_Sans_Condensed','DejaVu_Sans',sans-serif] text-[10px] text-[#dcdcdc]">
      <div className="flex h-[326px] shrink-0">
        <div className="relative min-w-0 grow border border-[#c4c4c4]">
          <LowerChart />
          <div className="absolute top-[4px] left-1 flex h-3 items-center text-[#f0f0f0]">
            <svg width="38" height="12" viewBox="0 0 38 12" aria-hidden="true">
              <path d="M0 1h7v10H0z" fill="#e0574f" /><path d="M7.500 1h7v10h-7z" fill="#3c87c9" /><path d="M1 3.500h5M1 6h5M1 8.500h5M8.500 3.500h5M8.500 6h5M8.500 8.500h5" stroke="#fff" />
              <path d="M22 1h4v4l3 3v3h-7z" fill="#fbd3cf" stroke="#e0574f" /><path d="M36 1h-4v4l-3 3v3h7z" fill="#8ac6f5" stroke="#3c87c9" /><path d="M27 1h4v2h-4z" fill="#ddd" />
            </svg>
            <span className="ml-1 whitespace-pre">GBPUSD, H1:  Great Britain Pound vs US Dollar</span>
          </div>
        </div>
        <div className="relative w-[57px] shrink-0">
          <div className="absolute inset-x-0 top-[12px] flex h-[294px] flex-col justify-between">
            {PRICES.map((p) => (
              <span key={p} className="flex h-3 items-center gap-px"><span className="h-px w-[3px] bg-[#dcdcdc]" />{p}</span>
            ))}
          </div>
          <span className="absolute top-[7px] left-[2px] flex h-[11px] w-[43px] items-center bg-[#778899] pl-[2px] text-black">1.29786</span>
        </div>
      </div>
      <div className="grid h-[18px] grid-cols-[repeat(14,minmax(0,1fr))_85px] items-center">
        {DATES.map((d) => (
          <span key={d} className="relative whitespace-nowrap before:absolute before:-top-[2px] before:left-0 before:h-[3px] before:w-px before:bg-[#dcdcdc]">{d}</span>
        ))}
      </div>
    </div>
  );
}

const MENU: [string, string][] = [["File", "w-[39px]"], ["View", "w-[46px]"], ["Insert", "w-[50px]"], ["Charts", "w-[53px]"], ["Tools", "w-[49px]"], ["Window", "w-[65px]"], ["Help", "w-[40px]"]];

function TerminalWindow() {
  return (
    <section aria-label="Trading terminal" className="absolute top-[337px] right-0 bottom-0 left-2 flex flex-col overflow-hidden rounded-t-lg border-t border-[#b9c0c4] bg-[#f0f0f0] shadow-[0_2px_18px_rgba(0,0,0,0.35)]">
      <div className="flex h-[29px] shrink-0 items-center bg-[linear-gradient(90deg,#faf1e6_0%,#f6f1e8_16%,#e8f6f6_33%,#edf3fb_55%,#eef3fa_100%)] text-xs text-[#1b1b1b]">
        <svg width="16" height="16" viewBox="0 0 16 16" className="ml-[6px] shrink-0" aria-hidden="true">
          <path d="M0 0h16v16H0z" fill="#0a0f0a" /><path d="M1.500 7l3-3 2 2 2-2v3z" fill="#ddd" /><path d="M9.500 2v4M14 2.500h-2.500v3H14" stroke="#21e03a" fill="none" /><path d="M2 9h12" stroke="#8fa892" strokeWidth="1.500" strokeDasharray="2 .5" /><path d="M2 12.500h12" stroke="#1fae35" strokeWidth="2" strokeDasharray="2 .5" />
        </svg>
        <h2 className="ml-[5px] grow whitespace-nowrap">52164340 - ICMarketsSC-Demo: Demo Account - Hedge - Raw Trading Ltd - [GBPUSD,H1]</h2>
        <button type="button" aria-label="Minimize" className="flex w-[46px] justify-center"><Minus size={13} strokeWidth={1.6} /></button>
        <button type="button" aria-label="Maximize" className="flex w-[47px] justify-center"><Square size={13} strokeWidth={2.2} /></button>
        <button type="button" aria-label="Close" className="mr-px flex w-[47px] justify-center"><X size={16} strokeWidth={1.6} /></button>
      </div>
      <nav aria-label="Menu" className="flex h-[20px] shrink-0 items-center text-xs text-[#1b1b1b]">
        <Glyph size={16} className="ml-1 text-[#23b53a]"><path d="M3 7h6v10H3zM6 3v4M6 17v4M14 5h6v11h-6zM17 1v4M17 16v7" strokeWidth="2.200" /></Glyph>
        <span className="w-[8px]" />
        {MENU.map(([m, w]) => (
          <button key={m} type="button" className={`${w} shrink-0 pl-[2px] text-left`}><span className="underline underline-offset-2">{m[0]}</span>{m.slice(1)}</button>
        ))}
        <span className="grow" />
        <span className="mr-[5px] flex items-center gap-[9px] text-[#9a9a9a]">
          <button type="button" aria-label="Minimize chart"><Minus size={10} /></button>
          <button type="button" aria-label="Restore chart"><svg width="9" height="9" viewBox="0 0 9 9" fill="none" stroke="currentColor" strokeWidth="1.300"><rect x="1" y="2.500" width="5.500" height="5.500" rx="1" /><path d="M3 1h4q1 0 1 1v4" /></svg></button>
          <button type="button" aria-label="Close chart"><X size={12} /></button>
        </span>
      </nav>
      <TerminalToolbar />
      <TerminalChart />
      <footer className="flex h-6 shrink-0 border-t border-white pt-[5px] text-xs leading-4 text-[#333]">
        <span className="w-[823px] shrink-0 pl-[2px]">For Help, press F1</span>
        <span className="w-[132px] shrink-0 border-l-2 border-[#cfcfcf] pl-1">Default</span>
        {range(7).map((i) => <span key={i} className="min-w-0 grow border-l-2 border-[#cfcfcf]" />)}
        <span className="flex w-[115px] shrink-0 items-start gap-1 border-l-2 border-[#cfcfcf] pl-3">
          <svg width="10" height="12" viewBox="0 0 10 12" aria-hidden="true"><path d="M0 8h2v4H0zM3 5h2v7H3zM6 2h2v10H6z" fill="#23b53a" /></svg>151.20 ms
        </span>
      </footer>
    </section>
  );
}

export default function App() {
  return (
    <div className={`relative flex h-screen min-h-[780px] w-full flex-col overflow-hidden bg-[#ebebeb] ${TV_FONT}`}>
      <TopBar />
      <main className="mt-1 flex min-h-0 grow">
        <DrawingRail />
        <div className="ml-[3px] flex min-w-0 grow overflow-hidden rounded-tl bg-white">
          <div className="relative min-w-0 grow">
            <UpperChart />
            <Legend />
            <span className="absolute top-[274px] left-[12px] text-[20px] leading-8 font-extrabold whitespace-nowrap text-black">17 Trading View</span>
          </div>
          <UpperAxis />
        </div>
      </main>
      <div className="absolute top-[430px] bottom-0 left-0 w-2 bg-[linear-gradient(#4a3b22,#7d6a3c_8%,#b09248_14%,#5c5a30_24%,#4f5f26_33%,#c08a4c_40%,#a87840_50%,#5a4434_56%,#3d3230_75%,#2a2424)]" />
      <TerminalWindow />
    </div>
  );
}
